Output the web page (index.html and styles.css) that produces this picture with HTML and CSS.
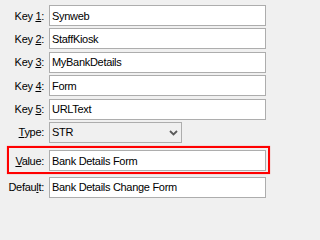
FILE: index.html
```html
<!DOCTYPE html>
<html>
<head>
<meta charset="utf-8">
<link rel="stylesheet" href="styles.css">
</head>
<body>
<div class="form">
  <div class="row"><label class="label">Key <u>1</u>:</label><input class="field" type="text" value="Synweb"></div>
  <div class="row"><label class="label">Key <u>2</u>:</label><input class="field" type="text" value="StaffKiosk"></div>
  <div class="row"><label class="label">Key <u>3</u>:</label><input class="field" type="text" value="MyBankDetails"></div>
  <div class="row"><label class="label">Key <u>4</u>:</label><input class="field" type="text" value="Form"></div>
  <div class="row"><label class="label">Key <u>5</u>:</label><input class="field" type="text" value="URLText"></div>
  <div class="row"><label class="label"><u>T</u>ype:</label>
    <div class="select-wrap">
      <select class="select"><option>STR</option></select>
      <svg class="chevron" width="9" height="6" viewBox="0 0 9 6"><path d="M1 1 L4.5 4.5 L8 1" fill="none" stroke="#5a5a5a" stroke-width="1.8"/></svg>
    </div>
  </div>
  <div class="row highlight"><label class="label short"><u>V</u>alue:</label><input class="field" type="text" value="Bank Details Form"></div>
  <div class="row"><label class="label">Defau<u>l</u>t:</label><input class="field" type="text" value="Bank Details Change Form"></div>
</div>
</body>
</html>
```
FILE: styles.css
```css
html, body {
  margin: 0;
  padding: 0;
  background: #f0f0f0;
}
body {
  width: 271px;
  height: 202px;
  overflow: hidden;
  font-family: "Liberation Sans", Arial, sans-serif;
  font-size: 11px;
  letter-spacing: -0.3px;
  color: #000;
}
.form {
  display: flex;
  flex-direction: column;
  gap: 2.4px;
  padding-top: 5px;
}
.row {
  display: flex;
  align-items: center;
  height: 21px;
}
.label {
  width: 44px;
  flex: none;
  text-align: right;
  white-space: nowrap;
  margin-right: 5px;
}
.label u {
  text-decoration-thickness: 1px;
  text-underline-offset: 1px;
}
.field {
  box-sizing: border-box;
  width: 217px;
  height: 21px;
  margin: 0;
  padding: 0 0 0 2px;
  border: 1px solid #adadad;
  background: #fff;
  font: inherit;
  letter-spacing: inherit;
  color: #000;
  outline: none;
}
.select-wrap {
  position: relative;
  width: 133px;
  height: 21px;
}
.select {
  appearance: none;
  -webkit-appearance: none;
  box-sizing: border-box;
  width: 133px;
  height: 21px;
  margin: 0;
  padding: 0 0 0 2px;
  border: 1px solid #adadad;
  border-radius: 0;
  background: #f0f0f0;
  font: inherit;
  letter-spacing: inherit;
  color: #000;
  outline: none;
}
.chevron {
  position: absolute;
  right: 4px;
  top: 8px;
  pointer-events: none;
}
.highlight {
  height: auto;
  margin: 1px 1px 0 7px;
  padding: 2px 2px 1px 0;
  border: 2px solid #ff0000;
  box-shadow: 0 0 1px rgba(255, 0, 0, 0.5);
}
.label.short {
  width: 35px;
}
```
